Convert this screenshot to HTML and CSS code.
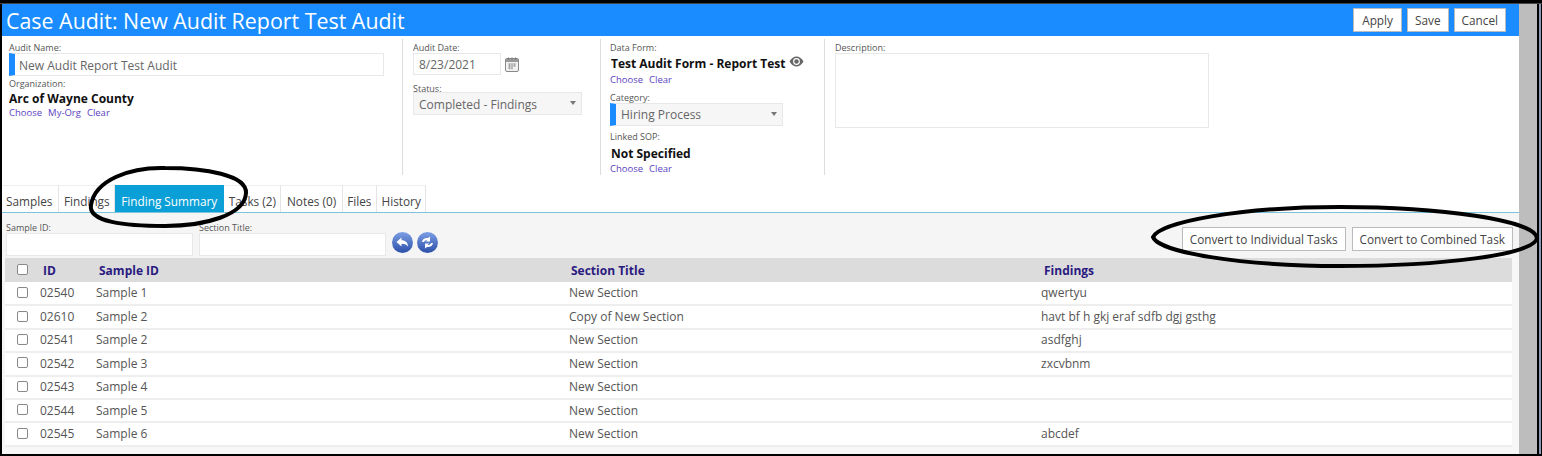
FILE: index.html
```html
<!DOCTYPE html>
<html lang="en">
<head>
  <meta charset="UTF-8">
  <title>Case Audit</title>
  <link rel="stylesheet" href="styles.css">
</head>
<body>
  <div class="frame">
    <div class="page">
      <!-- Title bar -->
      <div class="title-bar">
        <h1>Case Audit: New Audit Report Test Audit</h1>
        <div class="title-buttons">
          <button class="btn btn-apply">Apply</button>
          <button class="btn">Save</button>
          <button class="btn">Cancel</button>
        </div>
      </div>

      <!-- Audit form -->
      <div class="audit-form">
        <div class="col col-name">
          <label>Audit Name:</label>
          <div class="field required name-field">New Audit Report Test Audit</div>
          <label>Organization:</label>
          <div class="value">Arc of Wayne County</div>
          <div class="links"><a>Choose</a><a>My-Org</a><a>Clear</a></div>
        </div>
        <div class="col col-date">
          <label>Audit Date:</label>
          <div class="date-row">
            <div class="field date-field">8/23/2021</div>
            <svg class="cal-icon" width="14" height="15" viewBox="0 0 14 15">
              <rect x="0.5" y="1.5" width="13" height="13" rx="1.5" fill="#f2f2f2" stroke="#888"/>
              <rect x="1" y="2" width="12" height="3" fill="#999"/>
              <path d="M3.5 0.5v2M7 0.5v2M10.5 0.5v2" stroke="#777"/>
              <path d="M3 7h8M3 9h8M3 11h5M4.5 6.5v6M7 6.5v6M9.5 6.5v3" stroke="#999" stroke-width="0.8"/>
            </svg>
          </div>
          <label class="status-label">Status:</label>
          <div class="field select status-select">Completed - Findings<span class="caret"></span></div>
        </div>
        <div class="col col-form">
          <label>Data Form:</label>
          <div class="value form-value">Test Audit Form - Report Test
            <svg class="eye-icon" width="15" height="11" viewBox="0 0 15 11">
              <path d="M0.5 5.5C2.5 2 5 0.5 7.5 0.5S12.5 2 14.5 5.5C12.5 9 10 10.5 7.5 10.5S2.5 9 0.5 5.5Z" fill="#666"/>
              <circle cx="7.5" cy="5.5" r="3.4" fill="#fff"/>
              <circle cx="7.5" cy="5.5" r="2.2" fill="#666"/>
            </svg>
          </div>
          <div class="links form-links"><a>Choose</a><a>Clear</a></div>
          <label class="category-label">Category:</label>
          <div class="field select required category-select">Hiring Process<span class="caret"></span></div>
          <label class="sop-label">Linked SOP:</label>
          <div class="value sop-value">Not Specified</div>
          <div class="links sop-links"><a>Choose</a><a>Clear</a></div>
        </div>
        <div class="col col-desc">
          <label>Description:</label>
          <div class="field desc-field"></div>
        </div>
      </div>

      <!-- Tabs -->
      <div class="tabs">
        <div class="tab tab-first">Samples</div>
        <div class="tab">Findings</div>
        <div class="tab active">Finding Summary</div>
        <div class="tab">Tasks (2)</div>
        <div class="tab tab-wide">Notes (0)</div>
        <div class="tab">Files</div>
        <div class="tab">History</div>
      </div>

      <!-- Filter row -->
      <div class="filters">
        <div class="filter">
          <label>Sample ID:</label>
          <div class="field filter-field"></div>
        </div>
        <div class="filter">
          <label>Section Title:</label>
          <div class="field filter-field"></div>
        </div>
        <div class="filter-icons">
          <svg width="21" height="21" viewBox="0 0 21 21">
            <defs>
              <linearGradient id="roundBlue" x1="0" y1="0" x2="0" y2="1">
                <stop offset="0" stop-color="#7d9fe6"/>
                <stop offset="1" stop-color="#2b4fa8"/>
              </linearGradient>
            </defs>
            <circle cx="10.5" cy="10.5" r="10.5" fill="url(#roundBlue)"/>
            <path d="M4.5 10L9.5 5.5V8.2C13.5 8.2 16 10.5 16 14.5C14.5 12.5 12.5 11.8 9.5 11.8V14.5Z" fill="#fff"/>
          </svg>
          <svg width="21" height="21" viewBox="0 0 21 21">
            <circle cx="10.5" cy="10.5" r="10.5" fill="url(#roundBlue)"/>
            <path d="M5 10C5.5 7 8 5.5 11 6L13 4.5V9.5H8.5L10.5 8C9 7.8 7.5 8.5 7 10ZM16 11C15.5 14 13 15.5 10 15L8 16.5V11.5H12.5L10.5 13C12 13.2 13.5 12.5 14 11Z" fill="#fff"/>
          </svg>
        </div>
        <div class="filter-buttons">
          <button class="btn">Convert to Individual Tasks</button>
          <button class="btn">Convert to Combined Task</button>
        </div>
      </div>

      <!-- Findings table -->
      <div class="table-area">
        <table class="findings">
          <thead>
            <tr>
              <th class="c-check"><span class="check"></span></th>
              <th class="c-id">ID</th>
              <th class="c-sample">Sample ID</th>
              <th class="c-section">Section Title</th>
              <th class="c-findings">Findings</th>
            </tr>
          </thead>
          <tbody>
            <tr><td class="c-check"><span class="check"></span></td><td>02540</td><td>Sample 1</td><td>New Section</td><td>qwertyu</td></tr>
            <tr><td class="c-check"><span class="check"></span></td><td>02610</td><td>Sample 2</td><td>Copy of New Section</td><td>havt bf h gkj eraf sdfb dgj gsthg</td></tr>
            <tr><td class="c-check"><span class="check"></span></td><td>02541</td><td>Sample 2</td><td>New Section</td><td>asdfghj</td></tr>
            <tr><td class="c-check"><span class="check"></span></td><td>02542</td><td>Sample 3</td><td>New Section</td><td>zxcvbnm</td></tr>
            <tr><td class="c-check"><span class="check"></span></td><td>02543</td><td>Sample 4</td><td>New Section</td><td></td></tr>
            <tr><td class="c-check"><span class="check"></span></td><td>02544</td><td>Sample 5</td><td>New Section</td><td></td></tr>
            <tr><td class="c-check"><span class="check"></span></td><td>02545</td><td>Sample 6</td><td>New Section</td><td>abcdef</td></tr>
          </tbody>
        </table>
      </div>
    </div>
    <div class="scrollbar"></div>
    <div class="edge"></div>
  </div>

  <!-- Hand-drawn annotation circles -->
  <svg class="marks" width="1542" height="456" viewBox="0 0 1542 456">
    <path d="M91 205C95 180 130 167 165 168C205 168 247 175 246 193C245 215 205 226 165 226C125 226 88 222 91 205Z"/>
    <path d="M1153 237C1160 222 1240 207 1340 207C1440 207 1535 220 1537 238C1535 255 1440 266 1340 266C1240 266 1158 252 1153 237Z"/>
  </svg>
</body>
</html>
```

FILE: styles.css
```css
/* Reset styles */
* {
  box-sizing: border-box;
  margin: 0;
  padding: 0;
}

body {
  width: 1542px;
  height: 456px;
  overflow: hidden;
  position: relative;
  background-color: #000;
  font-family: "Open Sans", Arial, sans-serif;
  font-size: 12px;
  color: #555;
}

.frame {
  display: flex;
  height: 451px;
  margin-top: 3px;
  padding-left: 2px;
  border-top: 1px solid #444;
}

.page {
  width: 1517px;
  background-color: #fff;
  overflow: hidden;
  display: flex;
  flex-direction: column;
}

.scrollbar {
  width: 18px;
  background-color: #bdbdbd;
}

.edge {
  width: 2px;
  margin-left: 2px;
  background-color: #8a9ab5;
}

/* Title bar */
.title-bar {
  height: 32px;
  flex-shrink: 0;
  padding: 0 13px 0 4px;
  background-color: #1a8cff;
  display: flex;
  justify-content: space-between;
  align-items: center;
}

.title-bar h1 {
  font-size: 21.4px;
  font-weight: 400;
  color: #fff;
}

.title-buttons {
  display: flex;
  gap: 5px;
}

.btn {
  height: 24px;
  padding: 0 7px;
  background-color: #fff;
  border: 1px solid #bbb;
  font-family: inherit;
  font-size: 11.8px;
  color: #444;
}

.btn-apply {
  padding: 0 8px;
}

/* Audit form */
.audit-form {
  height: 149px;
  flex-shrink: 0;
  padding-top: 3px;
  display: flex;
}

.col {
  height: 136px;
  border-right: 1px solid #ddd;
}

.col label {
  display: block;
  font-size: 9px;
  line-height: 11px;
  color: #555;
}

.col-name {
  width: 401px;
  padding: 3px 0 0 7px;
}

.col-date {
  width: 198px;
  padding: 3px 0 0 10px;
}

.col-form {
  width: 224px;
  padding: 3px 0 0 9px;
}

.col-desc {
  border-right: none;
  padding: 3px 0 0 10px;
}

.field {
  background-color: #fff;
  border: 1px solid #e8e8e8;
  font-size: 12px;
  line-height: 23px;
  color: #666;
}

.required {
  border-left: 6px solid #1a8cff;
}

.select {
  position: relative;
  background-color: #f6f6f6;
  padding-left: 5px;
}

.caret {
  position: absolute;
  right: 5px;
  top: 8px;
  border-left: 3.5px solid transparent;
  border-right: 3.5px solid transparent;
  border-top: 4px solid #777;
}

.name-field {
  width: 375px;
  height: 23px;
  margin-bottom: 2px;
  padding-left: 4px;
}

.value {
  font-size: 12px;
  font-weight: 700;
  line-height: 15px;
  margin-top: 2px;
  color: #111;
}

.links {
  font-size: 9.5px;
  line-height: 13px;
  color: #5b3fc0;
}

.links a {
  margin-right: 6px;
}

.date-row {
  display: flex;
  align-items: center;
  gap: 4px;
}

.date-field {
  width: 88px;
  height: 22px;
  padding-left: 5px;
  line-height: 21px;
}

.status-label {
  margin-top: 8px;
}

.status-select {
  width: 169px;
  height: 23px;
  margin-top: -2px;
}

.form-value {
  margin-top: 3px;
  padding-left: 1px;
}

.eye-icon {
  vertical-align: 1px;
}

.form-links {
  margin-top: 2px;
}

.category-label {
  margin-top: 6px;
}

.category-select {
  width: 173px;
  height: 23px;
  padding-left: 5px;
  line-height: 21px;
}

.sop-label {
  margin-top: 5px;
}

.sop-value {
  margin-top: 4px;
  padding-left: 1px;
}

.sop-links {
  margin-top: 1px;
}

.desc-field {
  width: 374px;
  height: 75px;
}

/* Tabs */
.tabs {
  height: 28px;
  flex-shrink: 0;
  display: flex;
  border-bottom: 1px solid #7cc4dc;
}

.tab {
  padding: 3px 4.5px 0;
  font-size: 11.8px;
  line-height: 24px;
  color: #444;
  background-color: #fff;
  border-top: 1px solid #eee;
  border-right: 1px solid #e4e4e4;
}

.tab-first {
  padding-left: 4px;
  padding-right: 6px;
}

.tab-wide {
  padding-left: 5.5px;
  padding-right: 5.5px;
}

.tab.active {
  padding-left: 6px;
  padding-right: 6px;
  background-color: #0a9fd6;
  border-color: #0a9fd6;
  color: #fff;
}

/* Filter row */
.filters {
  height: 45px;
  flex-shrink: 0;
  background-color: #f5f5f5;
  display: flex;
  align-items: flex-start;
  padding: 9px 6px 0 4px;
  gap: 6px;
}

.filter label {
  display: block;
  font-size: 9px;
  line-height: 11px;
}

.filter-field {
  width: 187px;
  height: 23px;
}

.filter-icons {
  display: flex;
  gap: 4px;
  margin: 10px 0 0 0;
}

.filter-buttons {
  margin-left: auto;
  display: flex;
  gap: 6px;
  margin-top: 5px;
}

/* Findings table */
.table-area {
  flex: 1;
  background-color: #f7f7f7;
  padding-left: 3px;
}

.findings {
  width: 1507px;
  background-color: #fff;
  border-collapse: collapse;
  table-layout: fixed;
}

.findings th {
  height: 24px;
  background-color: #dcdcdc;
  text-align: left;
  font-size: 12px;
  color: #2a1a80;
}

.findings td {
  height: 23.4px;
  padding-bottom: 1px;
  border-bottom: 2px solid #eee;
  font-size: 12px;
  color: #555;
}

.findings .c-check {
  width: 35px;
  padding-left: 12px;
  padding-bottom: 2px;
}

.c-id {
  width: 56px;
  padding-left: 3px;
}

.c-sample {
  width: 473px;
  padding-left: 3px;
}

.c-section {
  width: 472px;
  padding-left: 2px;
}

.c-findings {
  padding-left: 3px;
}

.check {
  display: block;
  width: 11px;
  height: 11px;
  border: 1px solid #888;
  border-radius: 2px;
  background-color: #fff;
}

/* Annotation circles */
.marks {
  position: absolute;
  left: 0;
  top: 0;
  pointer-events: none;
}

.marks path {
  fill: none;
  stroke: #000;
  stroke-width: 4;
}
```
